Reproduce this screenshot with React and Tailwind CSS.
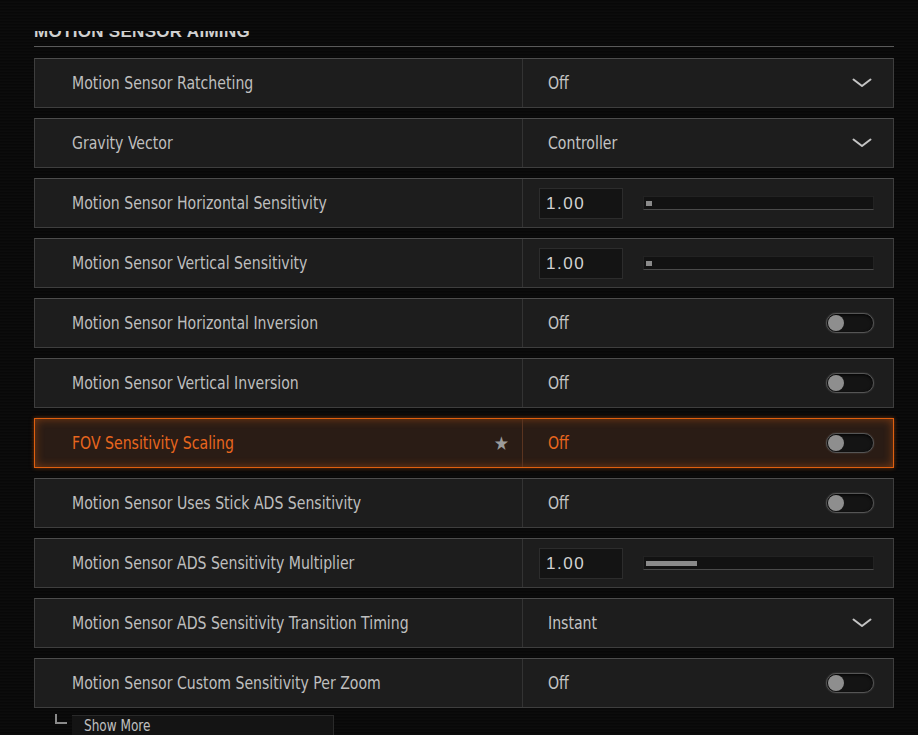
import React from "react";

const FONT = { fontFamily: '"DejaVu Sans Condensed","DejaVu Sans","Liberation Sans",sans-serif', fontStretch: "condensed" };

const rows = [
  { label: "Motion Sensor Ratcheting", type: "select", value: "Off" },
  { label: "Gravity Vector", type: "select", value: "Controller" },
  { label: "Motion Sensor Horizontal Sensitivity", type: "slider", value: "1.00", fill: 0 },
  { label: "Motion Sensor Vertical Sensitivity", type: "slider", value: "1.00", fill: 0 },
  { label: "Motion Sensor Horizontal Inversion", type: "toggle", value: "Off" },
  { label: "Motion Sensor Vertical Inversion", type: "toggle", value: "Off" },
  { label: "FOV Sensitivity Scaling", type: "toggle", value: "Off", active: true },
  { label: "Motion Sensor Uses Stick ADS Sensitivity", type: "toggle", value: "Off" },
  { label: "Motion Sensor ADS Sensitivity Multiplier", type: "slider", value: "1.00", fill: 51 },
  { label: "Motion Sensor ADS Sensitivity Transition Timing", type: "select", value: "Instant" },
  { label: "Motion Sensor Custom Sensitivity Per Zoom", type: "toggle", value: "Off" },
];

function Chevron() {
  return (
    <svg width="20" height="10" viewBox="0 0 20 10" className="shrink-0">
      <path d="M1.5 1.5 L10 8 L18.5 1.5" fill="none" stroke="#c4c4c4" strokeWidth="2" strokeLinecap="round" strokeLinejoin="round" />
    </svg>
  );
}

function Toggle() {
  return (
    <div className="flex h-[20px] w-[48px] items-center rounded-full border border-[#555555] bg-[#141414] px-[1px] shadow-[inset_0_1px_3px_rgba(0,0,0,0.9),0_0_2px_rgba(200,200,200,0.25)]">
      <div className="h-[16px] w-[16px] rounded-full bg-[#8e8e8e]" />
    </div>
  );
}

function T({ children, className }) {
  return (
    <span className={"inline-block origin-left scale-x-[0.87] whitespace-nowrap text-[18px] leading-none " + className}>
      {children}
    </span>
  );
}

function Row({ r }) {
  const active = r.active;
  return (
    <div
      className={
        "flex h-[50px] w-[860px] " +
        (active
          ? "border border-[#e0600f] bg-[#2a1c15] shadow-[inset_0_0_10px_rgba(224,96,15,0.45),0_0_4px_rgba(224,96,15,0.5)]"
          : "border border-[#3e3e3e] border-t-[#4d4d4d] bg-[#1d1d1d]")
      }
    >
      <div
        className={
          "flex w-[488px] items-center justify-between border-r pl-[37px] pr-[13px] " +
          (active ? "border-[#5a3420]" : "border-[#333333]")
        }
      >
        <T className={active ? "text-[#e8661e]" : "text-[#bfbfbf]"}>{r.label}</T>
        {active && <span className="text-[19px] leading-none text-[#9b9b9b]">★</span>}
      </div>
      <div className="flex flex-1 items-center">
        {r.type === "select" && (
          <div className="flex flex-1 items-center justify-between pl-[25px] pr-[21px]">
            <T className="text-[#c4c4c4]">{r.value}</T>
            <Chevron />
          </div>
        )}
        {r.type === "toggle" && (
          <div className="flex flex-1 items-center justify-between pl-[25px] pr-[19px]">
            <T className={active ? "text-[#e8661e]" : "text-[#c4c4c4]"}>{r.value}</T>
            <Toggle />
          </div>
        )}
        {r.type === "slider" && (
          <div className="flex flex-1 items-center pl-[16px] pr-[19px]">
            <div className="flex h-[31px] w-[84px] items-center border border-[#2c2c2c] bg-[#141414] pl-[6px]">
              <span className="text-[17px] leading-none tracking-[1.5px] text-[#d2d2d2]" style={{ fontFamily: '"Liberation Sans",sans-serif' }}>
                {r.value}
              </span>
            </div>
            <div className="ml-[20px] flex h-[14px] flex-1 items-center border border-[#222] border-b-[#4a4a4a] bg-[#121212] px-[2px]">
              <div className="h-[5px] bg-[#8a8a8a]" style={{ width: r.fill ? r.fill + "px" : "6px" }} />
            </div>
          </div>
        )}
      </div>
    </div>
  );
}

export default function App() {
  return (
    <div
      className="h-[735px] w-[918px] overflow-hidden bg-[#0b0b0b] bg-[repeating-linear-gradient(0deg,#0c0c0c_0px,#0c0c0c_1px,#080808_2px,#080808_3px)]"
      style={FONT}
    >
      <div className="pl-[34px] pt-[31px]">
        <div className="w-[860px] border-b border-[#5a5a5a] pb-[6px]">
          <div className="h-[9px] overflow-hidden">
            <div
              className="mt-[-9px] text-[17px] font-bold uppercase leading-[20px] tracking-[0.3px] text-[#d0d0d0]"
              style={{ fontFamily: '"Liberation Sans",sans-serif' }}
            >
              Motion Sensor Aiming
            </div>
          </div>
        </div>
        <div className="mt-[11px] flex flex-col gap-[10px]">
          {rows.map((r) => (
            <Row key={r.label} r={r} />
          ))}
        </div>
        <div className="mt-[7px] flex items-start">
          <div className="ml-[21px] mt-[-1px] h-[10px] w-[12px] border-b-2 border-l-2 border-[#8a8a8a]" />
          <div className="ml-[5px] flex h-[30px] w-[262px] items-start border-r border-t border-[#2a2a2a] bg-[#141414] pl-[12px] pt-[2px]">
            <span className="inline-block origin-left scale-x-[0.84] whitespace-nowrap text-[16px] leading-none text-[#c0c0c0]">Show More</span>
          </div>
        </div>
      </div>
    </div>
  );
}
